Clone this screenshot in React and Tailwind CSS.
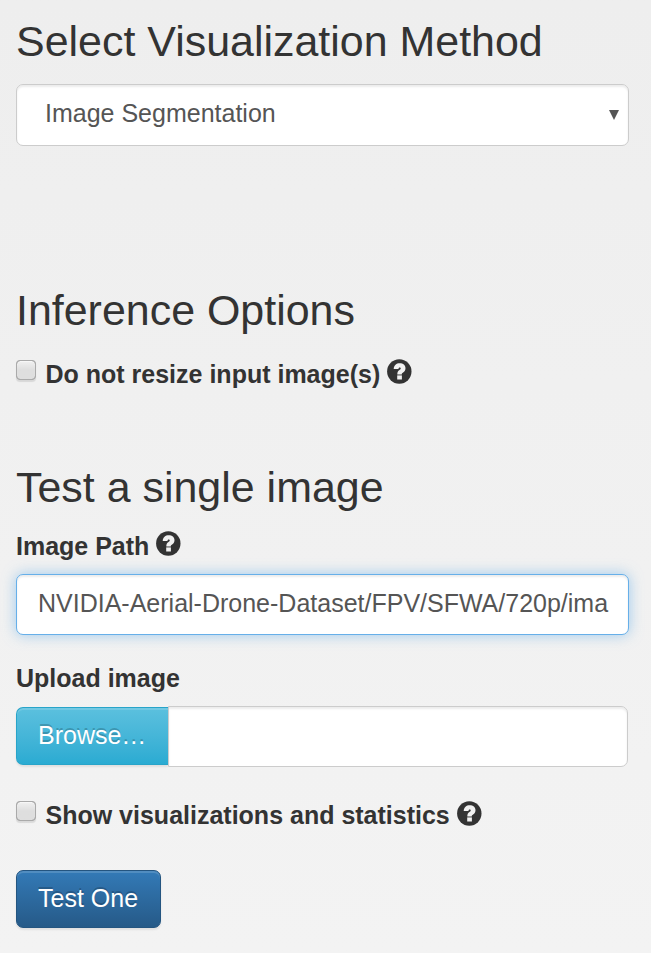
function HelpIcon() {
  return (
    <svg className="h-[25px] w-[25px] shrink-0" viewBox="0 0 25 25" aria-hidden="true">
      <circle cx="12.3" cy="12.5" r="12.2" fill="#333" />
      <path
        d="M6.7 9.900C7 6.200 9.300 4.300 12.700 4.300c3.400 0 5.800 2 5.800 4.900 0 2-.9 3.300-2.400 4.200-1 .6-1.300 1-1.300 2h-4.500c0-2.300.6-3.400 2.200-4.400.9-.6 1.200-.9 1.200-1.500 0-.6-.4-1-1-1-.8 0-1.200.5-1.300 1.600z"
        fill="#f1f1f1"
      />
      <rect x="10.2" y="16.4" width="4.7" height="4.1" fill="#f1f1f1" />
    </svg>
  );
}

function Checkbox() {
  return (
    <button
      role="checkbox"
      aria-checked="false"
      className="h-5 w-5 shrink-0 rounded-[4px] border-[1.5px] border-[#aaa] bg-linear-to-b from-[#ededed] from-[10%] to-[#dedede] to-[50%] shadow-[0_2px_1px_rgba(0,0,0,0.1),inset_0_1px_1px_rgba(255,255,255,0.6)] outline-[0.5px] -outline-offset-1 outline-[#aaa]"
    />
  );
}

function Heading({ children }) {
  return <h3 className="h-12 text-[42.95px] leading-[48px] whitespace-nowrap">{children}</h3>;
}

export default function App() {
  return (
    <main className="flex h-[953px] w-[651px] flex-col overflow-hidden bg-linear-to-b from-[#eee] to-[#f3f3f3] pt-[17px] pr-[22px] pl-4 font-['Liberation_Sans',Arial,sans-serif] text-[25px] leading-9 text-[#333]">
      <Heading>Select Visualization Method</Heading>
      <div className="mt-[19px] flex h-[62px] items-start justify-between rounded-[7px] border border-[#ccc] bg-white pt-[10px] pr-[9px] pl-[28px] text-[#555] shadow-[inset_0_2px_2px_rgba(0,0,0,0.075)]">
        <span>Image Segmentation</span>
        <svg className="mt-[15px] h-[10px] w-[10px]" viewBox="0 0 10 10" aria-hidden="true">
          <path d="M0 0h10L5 10z" fill="#555" />
        </svg>
      </div>

      <div className="mt-[140px]">
        <Heading>Inference Options</Heading>
      </div>
      <div className="mt-[22px] flex h-9 items-start font-bold">
        <div className="mt-1 flex"><Checkbox /></div>
        <span className="ml-[9.5px] whitespace-nowrap">Do not resize input image(s)</span>
        <div className="mt-[3px] ml-[7px]"><HelpIcon /></div>
      </div>

      <div className="mt-[71px]">
        <Heading>Test a single image</Heading>
      </div>
      <div className="mt-[17px] flex h-9 items-start font-bold">
        <span className="whitespace-nowrap">Image Path</span>
        <div className="mt-[3px] ml-[7px]"><HelpIcon /></div>
      </div>
      <div className="mt-[10px] h-[61px] shrink-0 rounded-[7px] border border-[#66afe9] bg-white px-[21px] pt-[10px] text-[#555] shadow-[inset_0_2px_2px_rgba(0,0,0,0.075),0_0_14px_rgba(102,175,233,0.6)]">
        <div className="whitespace-nowrap">NVIDIA-Aerial-Drone-Dataset/FPV/SFWA/720p/ima</div>
      </div>

      <div className="mt-[25px] h-9 font-bold">Upload image</div>
      <div className="mt-[10px] mr-px flex h-[61px] items-start">
        <button className="mt-px h-[58px] w-[152px] shrink-0 rounded-l-[7px] border border-r-0 border-[#28a4c9] bg-linear-to-b from-[#5bc0de] to-[#2aabd2] pb-[2px] pl-[21px] text-left text-white shadow-[inset_0_2px_0_rgba(255,255,255,0.15),0_2px_2px_rgba(0,0,0,0.075)] [text-shadow:0_-2px_0_rgba(0,0,0,0.2)]">
          Browse…
        </button>
        <div className="h-[61px] flex-1 rounded-r-[7px] border border-[#ccc] bg-white shadow-[inset_0_2px_2px_rgba(0,0,0,0.075)]" />
      </div>

      <div className="mt-[30px] flex h-9 items-start font-bold">
        <div className="mt-1 flex"><Checkbox /></div>
        <span className="ml-[9.5px] whitespace-nowrap">Show visualizations and statistics</span>
        <div className="mt-1 ml-[7px]"><HelpIcon /></div>
      </div>
      <button className="mt-[37px] h-[58px] w-[145px] shrink-0 rounded-[7px] border border-[#245580] bg-linear-to-b from-[#337ab7] to-[#265a88] pb-[2px] pl-[21px] text-left text-white shadow-[inset_0_2px_0_rgba(255,255,255,0.15),0_2px_2px_rgba(0,0,0,0.075)] [text-shadow:0_-2px_0_rgba(0,0,0,0.2)]">
        Test One
      </button>
    </main>
  );
}
